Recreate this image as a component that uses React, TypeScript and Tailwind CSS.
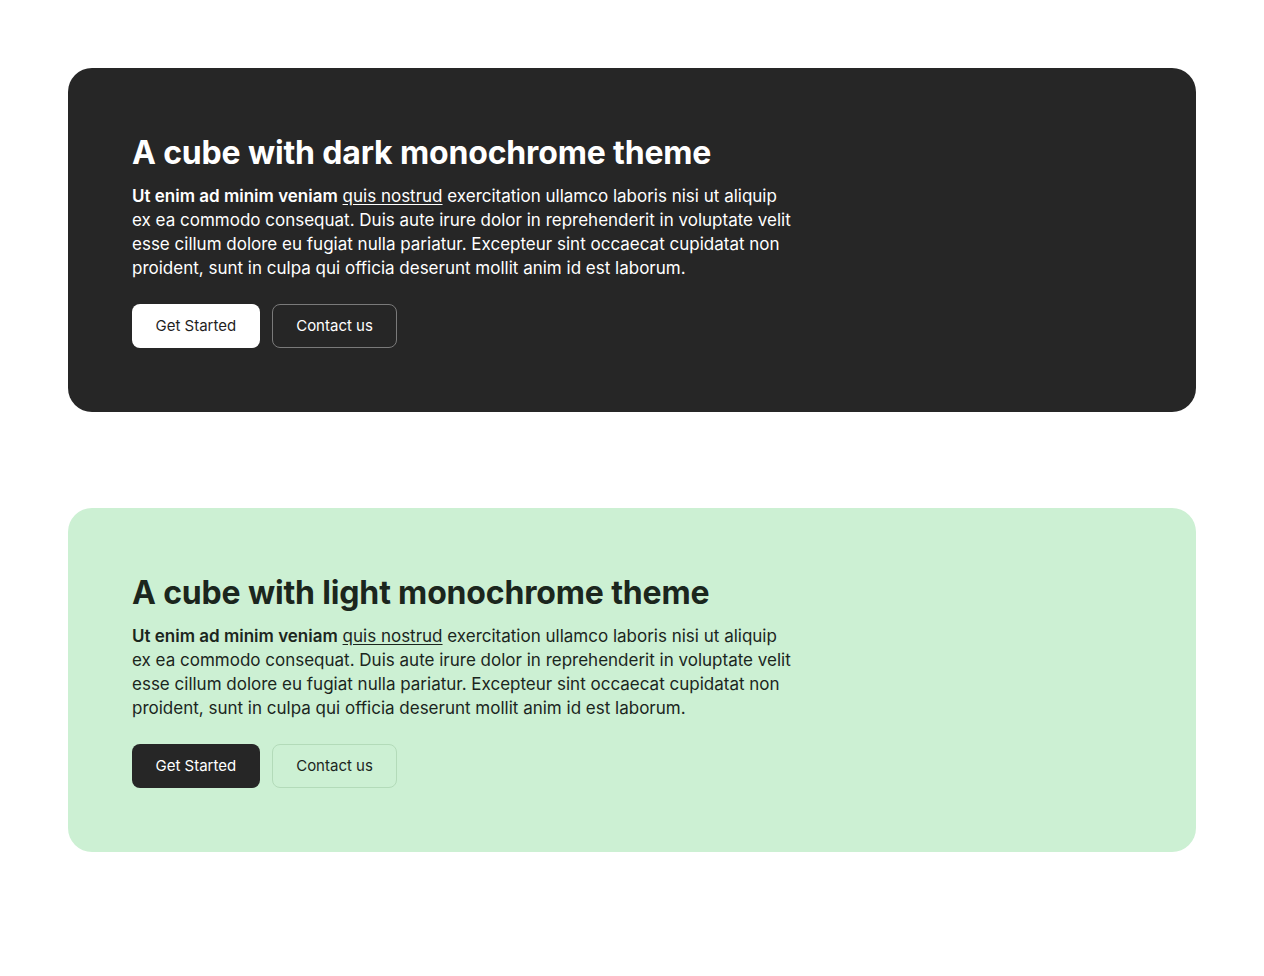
import React from 'react';

type Theme = 'dark' | 'light';

const Cube = ({ theme, title }: { theme: Theme; title: string }) => {
  const dark = theme === 'dark';
  return (
    <section className={`rounded-3xl p-16 ${dark ? 'bg-[#262626] text-white' : 'bg-[#ccf0d3] text-[#1b261d]'}`}>
      <div className="max-w-[664px]">
        <h2 className="text-[32px] leading-[42px] font-bold tracking-[-0.005em] mb-[10px]">{title}</h2>
        <p className="text-[17px] leading-6">
          <strong className="font-semibold">Ut enim ad minim veniam</strong>{' '}
          <a href="#" className="underline underline-offset-2">quis nostrud</a> exercitation ullamco laboris nisi ut aliquip ex ea commodo consequat. Duis aute irure dolor in reprehenderit in voluptate velit esse cillum dolore eu fugiat nulla pariatur. Excepteur sint occaecat cupidatat non proident, sunt in culpa qui officia deserunt mollit anim id est laborum.
        </p>
        <div className="flex gap-3 mt-6">
          <button className={`h-11 px-[23.5px] pt-px rounded-lg text-[15px] ${dark ? 'bg-white text-[#1f1f1f]' : 'bg-[#262626] text-white'}`}>
            Get Started
          </button>
          <button className={`h-11 px-[23.5px] pt-px rounded-lg text-[15px] border ${dark ? 'border-[#7a7a7a] text-white' : 'border-[#b3dbb9] text-[#1b261d]'}`}>
            Contact us
          </button>
        </div>
      </div>
    </section>
  );
};

export default function App() {
  return (
    <div className="min-h-screen bg-white px-[68px] pt-[68px] pb-[124px] flex flex-col gap-24 font-['Inter',sans-serif]">
      <Cube theme="dark" title="A cube with dark monochrome theme" />
      <Cube theme="light" title="A cube with light monochrome theme" />
    </div>
  );
}
